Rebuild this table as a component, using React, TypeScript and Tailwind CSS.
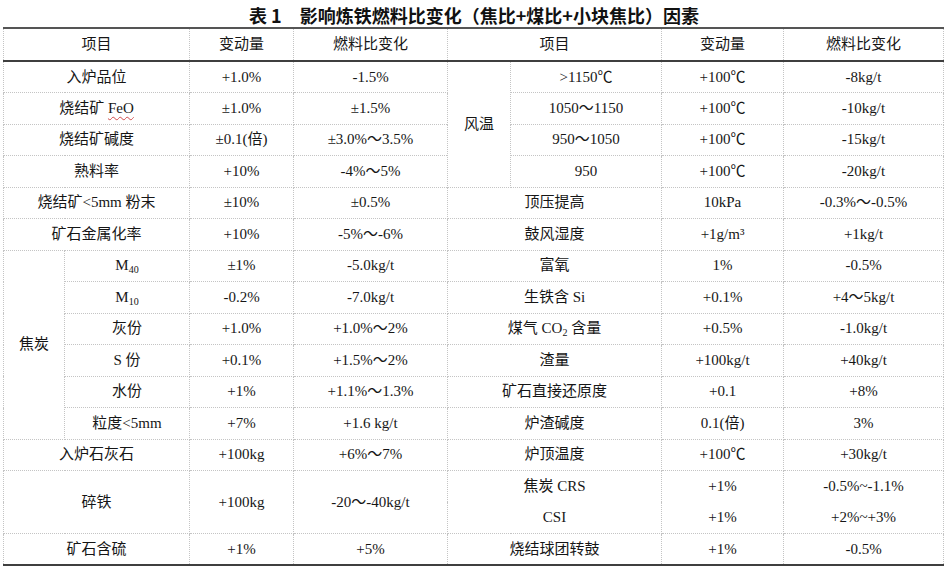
import type { ReactNode } from "react";

const cell = "border border-dotted border-[#c4c4c4] text-center align-middle p-0 font-normal";
const head = `${cell} [border-top:2px_solid_#555] [border-bottom:2px_solid_#3f3f3f]`;
const last = "[border-bottom:2px_solid_#3f3f3f]";
const joinDown = "[border-bottom-style:hidden]";

function Td({
  children,
  className = "",
  colSpan,
  rowSpan,
}: {
  children?: ReactNode;
  className?: string;
  colSpan?: number;
  rowSpan?: number;
}) {
  return (
    <td colSpan={colSpan} rowSpan={rowSpan} className={`${cell} ${className}`}>
      {children}
    </td>
  );
}

const Sub = ({ children }: { children: ReactNode }) => (
  <sub className="text-[10px] bottom-[-0.3em]">{children}</sub>
);

export default function App() {
  return (
    <div
      className="w-[948px] h-[570px] bg-white text-[#161616] px-[3px]"
      style={{ fontFamily: '"Liberation Serif", "Noto Sans CJK SC", serif' }}
    >
      <div
        className="h-[27px] flex items-center justify-center pt-[3px] text-[18px] font-bold text-[#111]"
        style={{ fontFamily: '"Noto Sans CJK SC", "Liberation Serif", sans-serif' }}
      >
        表 1　影响炼铁燃料比变化（焦比+煤比+小块焦比）因素
      </div>

      <table className="w-[940px] table-fixed border-collapse text-[15px] leading-none">
        <colgroup>
          <col className="w-[61px]" />
          <col className="w-[125px]" />
          <col className="w-[104px]" />
          <col className="w-[154px]" />
          <col className="w-[63px]" />
          <col className="w-[151px]" />
          <col className="w-[122px]" />
          <col className="w-[160px]" />
        </colgroup>
        <thead>
          <tr className="h-[33px]">
            <th colSpan={2} className={head}>项目</th>
            <th className={head}>变动量</th>
            <th className={head}>燃料比变化</th>
            <th colSpan={2} className={head}>项目</th>
            <th className={head}>变动量</th>
            <th className={head}>燃料比变化</th>
          </tr>
        </thead>
        <tbody>
          <tr className="h-[31.5px]">
            <Td colSpan={2}>入炉品位</Td>
            <Td>+1.0%</Td>
            <Td>-1.5%</Td>
            <Td rowSpan={4}>风温</Td>
            <Td>&gt;1150℃</Td>
            <Td>+100℃</Td>
            <Td>-8kg/t</Td>
          </tr>
          <tr className="h-[31.5px]">
            <Td colSpan={2}>
              烧结矿{" "}
              <span className="underline decoration-wavy decoration-[#d24a4a] decoration-1 underline-offset-[3px]">
                FeO
              </span>
            </Td>
            <Td>±1.0%</Td>
            <Td>±1.5%</Td>
            <Td>1050～1150</Td>
            <Td>+100℃</Td>
            <Td>-10kg/t</Td>
          </tr>
          <tr className="h-[31.5px]">
            <Td colSpan={2}>烧结矿碱度</Td>
            <Td>±0.1(倍)</Td>
            <Td>±3.0%～3.5%</Td>
            <Td>950～1050</Td>
            <Td>+100℃</Td>
            <Td>-15kg/t</Td>
          </tr>
          <tr className="h-[31.5px]">
            <Td colSpan={2}>熟料率</Td>
            <Td>+10%</Td>
            <Td>-4%～5%</Td>
            <Td>950</Td>
            <Td>+100℃</Td>
            <Td>-20kg/t</Td>
          </tr>
          <tr className="h-[31.5px]">
            <Td colSpan={2}>烧结矿&lt;5mm 粉末</Td>
            <Td>±10%</Td>
            <Td>±0.5%</Td>
            <Td colSpan={2}>顶压提高</Td>
            <Td>10kPa</Td>
            <Td>-0.3%～-0.5%</Td>
          </tr>
          <tr className="h-[31.5px]">
            <Td colSpan={2}>矿石金属化率</Td>
            <Td>+10%</Td>
            <Td>-5%～-6%</Td>
            <Td colSpan={2}>鼓风湿度</Td>
            <Td>+1g/m³</Td>
            <Td>+1kg/t</Td>
          </tr>
          <tr className="h-[31.5px]">
            <Td rowSpan={6}>焦炭</Td>
            <Td>
              M<Sub>40</Sub>
            </Td>
            <Td>±1%</Td>
            <Td>-5.0kg/t</Td>
            <Td colSpan={2}>富氧</Td>
            <Td>1%</Td>
            <Td>-0.5%</Td>
          </tr>
          <tr className="h-[31.5px]">
            <Td>
              M<Sub>10</Sub>
            </Td>
            <Td>-0.2%</Td>
            <Td>-7.0kg/t</Td>
            <Td colSpan={2}>生铁含 Si</Td>
            <Td>+0.1%</Td>
            <Td>+4～5kg/t</Td>
          </tr>
          <tr className="h-[31.5px]">
            <Td>灰份</Td>
            <Td>+1.0%</Td>
            <Td>+1.0%～2%</Td>
            <Td colSpan={2}>
              煤气 CO<Sub>2</Sub> 含量
            </Td>
            <Td>+0.5%</Td>
            <Td>-1.0kg/t</Td>
          </tr>
          <tr className="h-[31.5px]">
            <Td>S 份</Td>
            <Td>+0.1%</Td>
            <Td>+1.5%～2%</Td>
            <Td colSpan={2}>渣量</Td>
            <Td>+100kg/t</Td>
            <Td>+40kg/t</Td>
          </tr>
          <tr className="h-[31.5px]">
            <Td>水份</Td>
            <Td>+1%</Td>
            <Td>+1.1%～1.3%</Td>
            <Td colSpan={2}>矿石直接还原度</Td>
            <Td>+0.1</Td>
            <Td>+8%</Td>
          </tr>
          <tr className="h-[31.5px]">
            <Td>粒度&lt;5mm</Td>
            <Td>+7%</Td>
            <Td>+1.6 kg/t</Td>
            <Td colSpan={2}>炉渣碱度</Td>
            <Td>0.1(倍)</Td>
            <Td>3%</Td>
          </tr>
          <tr className="h-[31.5px]">
            <Td colSpan={2}>入炉石灰石</Td>
            <Td>+100kg</Td>
            <Td>+6%～7%</Td>
            <Td colSpan={2}>炉顶温度</Td>
            <Td>+100℃</Td>
            <Td>+30kg/t</Td>
          </tr>
          <tr className="h-[31.5px]">
            <Td colSpan={2} rowSpan={2}>碎铁</Td>
            <Td rowSpan={2}>+100kg</Td>
            <Td rowSpan={2}>-20～-40kg/t</Td>
            <Td colSpan={2} className={joinDown}>焦炭 CRS</Td>
            <Td className={joinDown}>+1%</Td>
            <Td className={joinDown}>-0.5%~-1.1%</Td>
          </tr>
          <tr className="h-[31.5px]">
            <Td colSpan={2}>CSI</Td>
            <Td>+1%</Td>
            <Td>+2%~+3%</Td>
          </tr>
          <tr className="h-[31.5px]">
            <Td colSpan={2} className={last}>矿石含硫</Td>
            <Td className={last}>+1%</Td>
            <Td className={last}>+5%</Td>
            <Td colSpan={2} className={last}>烧结球团转鼓</Td>
            <Td className={last}>+1%</Td>
            <Td className={last}>-0.5%</Td>
          </tr>
        </tbody>
      </table>
    </div>
  );
}
